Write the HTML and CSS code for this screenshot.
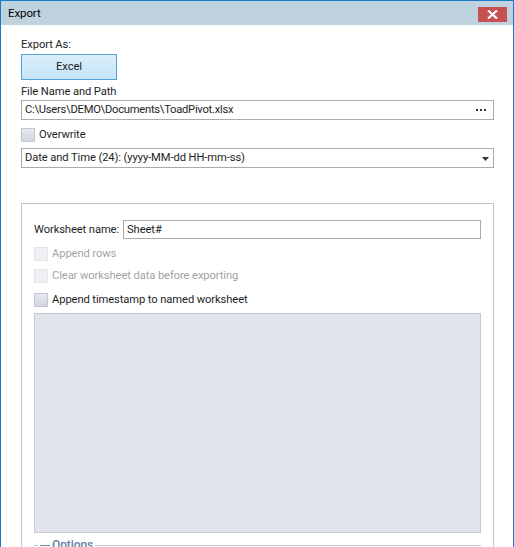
FILE: index.html
```html
<!DOCTYPE html>
<html>
<head>
<meta charset="utf-8">
<link rel="stylesheet" href="styles.css">
</head>
<body>
<div class="window">
  <div class="titlebar">
    <span class="title">Export</span>
    <div class="close">
      <svg width="11" height="9" viewBox="0 0 11 9"><path d="M1 0.5 L10 8.5 M10 0.5 L1 8.5" stroke="#fff" stroke-width="2.2"/></svg>
    </div>
  </div>
  <div class="content">
    <div class="label l-export">Export As:</div>
    <div class="btn">Excel</div>
    <div class="label l-file">File Name and Path</div>
    <div class="textbox path">
      <span class="path-text">C:\Users\DEMO\Documents\ToadPivot.xlsx</span>
      <svg class="dots" width="11" height="3" viewBox="0 0 11 3"><rect x="0" y="0" width="2" height="2" fill="#333"/><rect x="4" y="0" width="2" height="2" fill="#333"/><rect x="8" y="0" width="2" height="2" fill="#333"/></svg>
    </div>
    <div class="check-row over">
      <span class="cb"></span><span>Overwrite</span>
    </div>
    <div class="textbox combo">
      <span class="combo-text">Date and Time (24): (yyyy-MM-dd HH-mm-ss)</span>
      <svg class="arrow" width="7" height="4" viewBox="0 0 7 4"><path d="M0 0 H7 L3.5 4 Z" fill="#333"/></svg>
    </div>
    <div class="group">
      <div class="ws-row">
        <span class="ws-label">Worksheet name:</span>
        <div class="textbox ws"><span>Sheet#</span></div>
      </div>
      <div class="check-row disabled r1"><span class="cb"></span><span>Append rows</span></div>
      <div class="check-row disabled r2"><span class="cb"></span><span>Clear worksheet data before exporting</span></div>
      <div class="check-row r3"><span class="cb"></span><span>Append timestamp to named worksheet</span></div>
      <div class="preview"></div>
      <div class="options">
        <span class="minus"></span><span class="opt-text">Options</span>
      </div>
    </div>
  </div>
</div>
</body>
</html>
```

FILE: styles.css
```css
html, body {
  margin: 0;
  padding: 0;
  background: #ffffff;
  overflow: hidden;
}
body {
  width: 514px;
  height: 547px;
  font-family: Roboto, "Noto Sans", sans-serif;
  font-size: 11.2px;
  letter-spacing: -0.1px;
  color: #1e1e1e;
}
.window {
  box-sizing: border-box;
  width: 514px;
  height: 547px;
  border: 1px solid #1a78c8;
  border-bottom: none;
  overflow: hidden;
  background: #fff;
}
.titlebar {
  height: 24px;
  background: #bfd3df;
  display: flex;
  justify-content: space-between;
  align-items: flex-start;
}
.title {
  margin-left: 7px;
  line-height: 24px;
  font-size: 11.5px;
  color: #000;
}
.close {
  width: 29px;
  height: 15px;
  margin-top: 6px;
  margin-right: 6px;
  background: #c75050;
  display: flex;
  align-items: center;
  justify-content: center;
}
.content {
  padding: 0 19px 0 20px;
}
.label {
  line-height: 15px;
  height: 15px;
}
.l-export {
  margin-top: 12px;
}
.btn {
  box-sizing: border-box;
  margin-top: 2px;
  width: 96px;
  height: 26px;
  border: 1px solid #52a6d8;
  background: linear-gradient(#d9eefb, #c6e4f6);
  text-align: center;
  line-height: 24px;
  color: #1e1e1e;
}
.l-file {
  margin-top: 4px;
}
.textbox {
  box-sizing: border-box;
  height: 20px;
  border: 1px solid #a9abb1;
  background: #fff;
  display: flex;
  align-items: center;
  justify-content: space-between;
  padding: 0 6px 0 3px;
  line-height: 18px;
}
.path {
  margin-top: 1px;
}
.path-text {
  letter-spacing: -0.25px;
}
.dots {
  margin-top: 1px;
}
.check-row {
  display: flex;
  align-items: center;
  height: 14px;
  line-height: 14px;
}
.cb {
  box-sizing: border-box;
  width: 14px;
  height: 14px;
  border: 1px solid #c3c7cf;
  background: linear-gradient(#e4e7ee, #d3d7df);
  margin-right: 4px;
}
.over {
  margin-top: 8px;
}
.combo {
  margin-top: 6px;
  padding-right: 4px;
}
.arrow {
  margin-top: 1px;
}
.group {
  box-sizing: border-box;
  margin-top: 35px;
  border: 1px solid #c4c4c4;
  border-bottom: none;
  height: 400px;
  padding: 16px 12px 0 12px;
}
.ws-row {
  display: flex;
  align-items: center;
}
.ws-label {
  margin-right: 4px;
}
.ws {
  flex: 1;
  height: 19px;
}
.r1 { margin-top: 8px; }
.r2 { margin-top: 8px; }
.r3 { margin-top: 10px; }
.disabled {
  color: #a3a3a3;
}
.disabled .cb {
  border-color: #e3e5e9;
  background: #eff0f3;
}
.preview {
  box-sizing: border-box;
  margin-top: 6px;
  height: 220px;
  background: #e1e4ed;
  border: 1px solid #c8cad2;
}
.options {
  margin-top: 12px;
  border-top: 1px solid #c8cad2;
  position: relative;
  height: 20px;
}
.minus {
  position: absolute;
  left: 4px;
  top: -1px;
  width: 7px;
  height: 1px;
  padding: 0 2px;
  background: #fff;
  border-left: 2px solid #fff;
  border-right: 2px solid #fff;
  box-shadow: inset 0 0 0 10px #7283a8;
}
.opt-text {
  position: absolute;
  left: 16px;
  top: -8px;
  background: #fff;
  color: #6b7ea6;
  padding: 0 2px;
  line-height: 14px;
  font-size: 12px;
  font-weight: 500;
}
```
